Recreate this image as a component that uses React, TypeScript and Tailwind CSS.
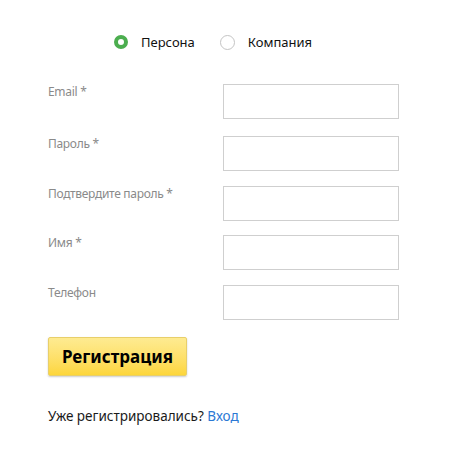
import React, { useState } from 'react';

const fields = [
  { label: 'Email *', type: 'email', gap: 'mb-[17px]' },
  { label: 'Пароль *', type: 'password', gap: 'mb-[15px]' },
  { label: 'Подтвердите пароль *', type: 'password', gap: 'mb-[14px]' },
  { label: 'Имя *', type: 'text', gap: 'mb-[15px]' },
  { label: 'Телефон', type: 'tel', gap: 'mb-[15px]' },
];

function Radio({ checked, label, onClick }: { checked: boolean; label: string; onClick: () => void }) {
  return (
    <button type="button" onClick={onClick} className="flex items-center gap-[13px]">
      {checked ? (
        <span className="w-[14px] h-[14px] rounded-full border-[4px] border-[#4cae4f] bg-white" />
      ) : (
        <span className="w-[15px] h-[15px] rounded-full border border-[#c4c4c4] bg-white" />
      )}
      <span className="text-[13px] leading-[20px] text-[#111]">{label}</span>
    </button>
  );
}

export default function App() {
  const [kind, setKind] = useState<'person' | 'company'>('person');

  return (
    <div className="w-[468px] h-[463px] bg-white font-['Noto_Sans',sans-serif] overflow-hidden">
      <div className="flex items-center gap-[25px] pl-[114px] pt-[32px]">
        <Radio checked={kind === 'person'} label="Персона" onClick={() => setKind('person')} />
        <Radio checked={kind === 'company'} label="Компания" onClick={() => setKind('company')} />
      </div>

      <form className="pl-[48px] mt-[32px]" onSubmit={e => e.preventDefault()}>
        <div className="flex flex-col">
          {fields.map(f => (
            <div key={f.label} className={`flex ${f.gap}`}>
              <label className="w-[175px] text-[12px] leading-[14px] tracking-[-0.3px] text-[#8a8a8a] pt-[1px]">
                {f.label}
              </label>
              <input
                type={f.type}
                className="w-[176px] h-[35px] border border-[#cfcfcf] bg-white outline-none px-2 text-[13px]"
              />
            </div>
          ))}
        </div>

        <button
          type="submit"
          className="mt-[2px] w-[139px] h-[39px] rounded-[2px] border border-[#e8cf6a] bg-gradient-to-b from-[#feeb91] to-[#fdd63a] shadow-[0_1px_2px_rgba(0,0,0,0.2)] text-[17px] font-bold text-black"
        >
          Регистрация
        </button>

        <p className="mt-[31px] text-[13.5px] leading-[18px] text-[#1a1a1a]">
          Уже регистрировались? <a href="#" className="text-[#2b78d4]">Вход</a>
        </p>
      </form>
    </div>
  );
}
